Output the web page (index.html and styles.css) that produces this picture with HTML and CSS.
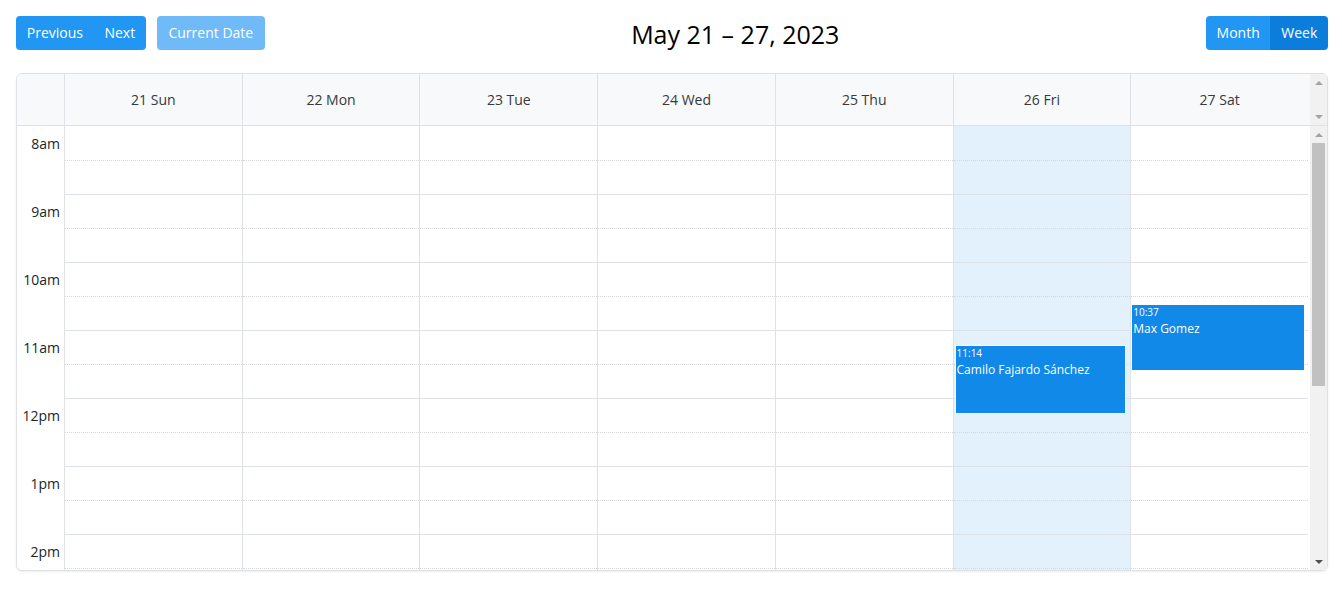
FILE: index.html
```html
<!DOCTYPE html>
<html lang="en">
<head>
<meta charset="utf-8">
<title>Scheduler</title>
<link rel="stylesheet" href="styles.css">
</head>
<body>
<div class="page">
  <div class="toolbar">
    <div class="tb-left">
      <div class="btn-group">
        <button class="btn">Previous</button>
        <button class="btn">Next</button>
      </div>
      <button class="btn btn-disabled">Current Date</button>
    </div>
    <h1 class="title">May 21 – 27, 2023</h1>
    <div class="tb-right">
      <div class="btn-group">
        <button class="btn">Month</button>
        <button class="btn btn-active">Week</button>
      </div>
    </div>
  </div>

  <div class="calendar">
    <div class="cal-head">
      <div class="head-grid">
        <div class="head-time"></div>
        <div class="head-day">21 Sun</div>
        <div class="head-day">22 Mon</div>
        <div class="head-day">23 Tue</div>
        <div class="head-day">24 Wed</div>
        <div class="head-day">25 Thu</div>
        <div class="head-day">26 Fri</div>
        <div class="head-day">27 Sat</div>
      </div>
      <div class="sb sb-head">
        <span class="arr arr-up arr-dim"></span>
        <span class="sb-fill"></span>
        <span class="arr arr-down arr-dim"></span>
      </div>
    </div>
    <div class="cal-body">
      <div class="body-grid">
        <div class="time-col">
          <div class="hour"><span>8am</span></div>
          <div class="hour"><span>9am</span></div>
          <div class="hour"><span>10am</span></div>
          <div class="hour"><span>11am</span></div>
          <div class="hour"><span>12pm</span></div>
          <div class="hour"><span>1pm</span></div>
          <div class="hour"><span>2pm</span></div>
        </div>
        <div class="day"><div class="slots"></div></div>
        <div class="day"><div class="slots"></div></div>
        <div class="day"><div class="slots"></div></div>
        <div class="day"><div class="slots"></div></div>
        <div class="day"><div class="slots"></div></div>
        <div class="day day-today">
          <div class="slots"></div>
          <div class="event" style="top:219px;height:69px;">
            <div class="ev-time">11:14</div>
            <div class="ev-name">Camilo Fajardo Sánchez</div>
          </div>
        </div>
        <div class="day day-last">
          <div class="slots"></div>
          <div class="event" style="top:178px;height:67px;">
            <div class="ev-time">10:37</div>
            <div class="ev-name">Max Gomez</div>
          </div>
        </div>
      </div>
      <div class="sb sb-body">
        <span class="arr arr-up arr-dim"></span>
        <span class="sb-track"><span class="sb-thumb"></span></span>
        <span class="arr arr-down"></span>
      </div>
    </div>
  </div>
</div>
<script>
  document.querySelectorAll('.slots').forEach(function (s) {
    for (var i = 0; i < 14; i++) {
      var d = document.createElement('div');
      d.className = 'slot' + (i % 2 === 0 ? ' slot-half' : '');
      s.appendChild(d);
    }
  });
</script>
</body>
</html>
```

FILE: styles.css
```css
* { box-sizing: border-box; }

html, body {
  margin: 0;
  background: #ffffff;
}

body {
  font-family: "Open Sans", "Noto Sans", "Liberation Sans", sans-serif;
  color: #212529;
}

.page {
  padding: 16px 14px 16px 16px;
}

/* Toolbar */
.toolbar {
  display: flex;
  align-items: center;
  height: 34px;
  margin-bottom: 23px;
}

.tb-left, .tb-right {
  display: flex;
  align-items: center;
  gap: 11px;
  flex: none;
}

.title {
  flex: 1;
  text-align: center;
  margin: 2px 0 0 0;
  font-size: 25px;
  font-weight: 400;
  color: #000;
}

.btn-group {
  display: flex;
  border-radius: 4px;
  overflow: hidden;
}

.btn {
  font-family: inherit;
  font-size: 14px;
  height: 34px;
  padding: 0 10.75px;
  border: none;
  background: #2196f3;
  color: #ffffff;
  border-radius: 4px;
  line-height: 34px;
  cursor: pointer;
}

.btn-group .btn { border-radius: 0; }

.btn-disabled {
  background: #6fbaf7;
  padding: 0 11.5px;
}

.btn-active { background: #0b7dda; }

/* Calendar */
.calendar {
  border: 1px solid #dee2e6;
  border-radius: 6px;
  overflow: hidden;
  box-shadow: 0 1px 2px rgba(0, 0, 0, 0.08);
  display: flex;
  flex-direction: column;
}

.cal-head {
  display: flex;
  height: 52px;
  background: #f8f9fa;
  border-bottom: 1px solid #dee2e6;
}

.head-grid {
  flex: 1;
  display: grid;
  grid-template-columns: 47px repeat(7, 1fr);
}

.head-day {
  border-left: 1px solid #dee2e6;
  display: flex;
  align-items: center;
  justify-content: center;
  font-size: 14px;
  color: #343a40;
}

.cal-body {
  display: flex;
  height: 444px;
  overflow: hidden;
}

.body-grid {
  flex: 1;
  display: grid;
  grid-template-columns: 47px repeat(7, 1fr);
  align-items: start;
}

.time-col {
  display: flex;
  flex-direction: column;
}

.hour {
  height: 68px;
  display: flex;
  justify-content: flex-end;
  padding-right: 4px;
}

.hour:first-child { height: 69px; }

.hour span {
  display: block;
  height: 34px;
  line-height: 34px;
  font-size: 14px;
  color: #212529;
}

.hour:first-child span { height: 35px; line-height: 35px; }

.day {
  position: relative;
  border-left: 1px solid #dee2e6;
}

.day-today { background: #e3f1fd; }

.slots {
  display: flex;
  flex-direction: column;
}

.slot {
  height: 34px;
  border-bottom: 1px solid #dee2e6;
}

.slot-half { border-bottom: 1px dotted #d8d8d8; }

.slot:first-child { height: 35px; }

/* Events */
.event {
  position: absolute;
  left: 1px;
  right: 4px;
  background: #1089e9;
  border: 1px solid #ffffff;
  color: #ffffff;
  padding: 1px 1px;
  overflow: hidden;
}

.day-last .event { left: 0; right: 3px; }

.ev-time {
  font-size: 10px;
  line-height: 13px;
}

.ev-name {
  font-size: 12px;
  line-height: 20px;
}

/* Fake scrollbars */
.sb {
  width: 19px;
  border-left: 2px solid #ffffff;
  background: #f1f1f1;
  display: flex;
  flex-direction: column;
  align-items: center;
}

.sb-head { border-left-color: #f8f9fa; }

.sb-fill { flex: 1; }

.arr {
  height: 17px;
  width: 17px;
  display: flex;
  align-items: center;
  justify-content: center;
  flex: none;
}

.arr::before {
  content: "";
  width: 0;
  height: 0;
  border-left: 4px solid transparent;
  border-right: 4px solid transparent;
}

.arr-up::before { border-bottom: 4px solid #505050; }
.arr-down::before { border-top: 4px solid #505050; }
.arr-up.arr-dim::before { border-bottom-color: #a3a3a3; }
.arr-down.arr-dim::before { border-top-color: #a3a3a3; }

.sb-track {
  flex: 1;
  width: 100%;
  display: flex;
  justify-content: center;
}

.sb-thumb {
  width: 13px;
  height: 243px;
  background: #c1c1c1;
}
```
